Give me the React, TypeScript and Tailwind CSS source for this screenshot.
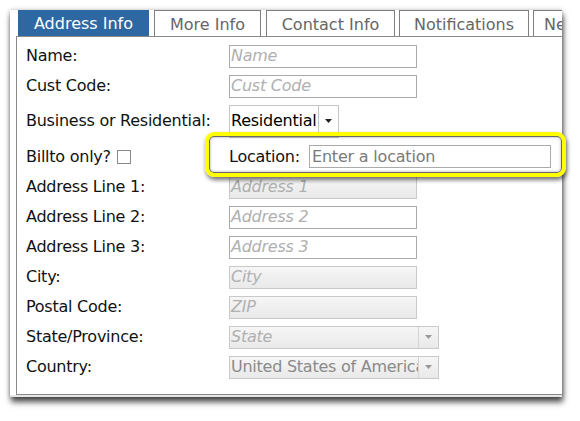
import React from "react";

const font = { fontFamily: '"DejaVu Sans", Verdana, sans-serif' };

function Arrow({ color }: { color: string }) {
  return (
    <svg width="7" height="4" viewBox="0 0 7 4">
      <polygon points="0,0 7,0 3.5,4" fill={color} />
    </svg>
  );
}

function TextBox({ ph, disabled, w = "w-[188px]" }: { ph: string; disabled?: boolean; w?: string }) {
  return (
    <div
      className={
        disabled
          ? `${w} h-[23px] border border-[#c9c9c9] bg-gradient-to-b from-[#f6f6f6] to-[#e9e9e9] flex items-center pl-[1px] overflow-hidden`
          : `${w} h-[23px] border border-[#ababab] bg-white flex items-center pl-[1px] overflow-hidden`
      }
    >
      <span className="italic text-[#b0b0b0] text-[16px] tracking-[-0.25px] whitespace-nowrap leading-none">{ph}</span>
    </div>
  );
}

function Row({ label, h = "h-[30px]", children }: { label: React.ReactNode; h?: string; children?: React.ReactNode }) {
  return (
    <div className={`flex items-center ${h}`}>
      <div className="w-[212px] shrink-0 pl-[9px] text-[16px] tracking-[-0.25px] text-[#111] whitespace-nowrap flex items-center">{label}</div>
      {children}
    </div>
  );
}

export default function App() {
  return (
    <div className="relative w-[580px] h-[421px] bg-white pt-[10px] pl-[10px]" style={font}>
      <div className="w-[552px] h-[387px] bg-white overflow-hidden flex flex-col shadow-[1px_5px_6px_rgba(0,0,0,0.7),0_0_4px_rgba(0,0,0,0.25)]">
        {/* tabs */}
        <div className="flex h-[26px] pl-[8px] shrink-0 text-[16px]">
          <div className="shrink-0 w-[131px] h-[26px] bg-[#2d68a3] border border-[#2d68a3] text-white flex items-center justify-center pt-[2px]">Address Info</div>
          <div className="shrink-0 ml-[5px] w-[107px] h-[26px] border border-b-0 border-[#7f7f7f] text-[#666] flex items-center justify-center pt-[2px]">More Info</div>
          <div className="shrink-0 ml-[5px] w-[129px] h-[26px] border border-b-0 border-[#7f7f7f] text-[#666] flex items-center justify-center pt-[2px]">Contact Info</div>
          <div className="shrink-0 ml-[4px] w-[130px] h-[26px] border border-b-0 border-[#7f7f7f] text-[#666] flex items-center justify-center pt-[2px]">Notifications</div>
          <div className="shrink-0 ml-[4px] w-[120px] h-[26px] border border-b-0 border-[#7f7f7f] text-[#666] flex items-center pl-[10px] pt-[2px]">Next</div>
        </div>
        {/* panel */}
        <div className="ml-[6px] w-[560px] shrink-0 h-[359px] border-l border-t border-b border-[#8a8a8a] bg-white pt-[4px] flex flex-col">
          <Row label="Name:"><TextBox ph="Name" /></Row>
          <Row label="Cust Code:"><TextBox ph="Cust Code" /></Row>
          <Row label="Business or Residential:" h="h-[40px]">
            <div className="w-[110px] h-[33px] border border-[#c4c4c4] bg-white flex">
              <div className="w-[88px] overflow-hidden flex items-center pl-[1px] text-[16px] tracking-[-0.25px] text-black whitespace-nowrap">Residential</div>
              <div className="flex-1 border-l border-[#c4c4c4] flex items-center justify-center"><Arrow color="#222" /></div>
            </div>
          </Row>
          <Row
            label={
              <>
                <span>Billto only?</span>
                <span className="ml-[6px] inline-block w-[14px] h-[14px] border border-[#8a8a8a] bg-white" />
              </>
            }
            h="h-[31px]"
          >
            <span className="text-[16px] tracking-[-0.25px] text-[#111] w-[80px] whitespace-nowrap">Location:</span>
            <div className="w-[242px] h-[23px] border border-[#ababab] bg-white flex items-center pl-[2px]">
              <span className="text-[16px] text-[#7a7a7a] tracking-[-0.2px] whitespace-nowrap leading-none">Enter a location</span>
            </div>
          </Row>
          <Row label="Address Line 1:"><TextBox ph="Address 1" disabled /></Row>
          <Row label="Address Line 2:"><TextBox ph="Address 2" /></Row>
          <Row label="Address Line 3:"><TextBox ph="Address 3" /></Row>
          <Row label="City:"><TextBox ph="City" disabled /></Row>
          <Row label="Postal Code:"><TextBox ph="ZIP" disabled /></Row>
          <Row label="State/Province:">
            <div className="w-[210px] h-[23px] border border-[#c9c9c9] bg-gradient-to-b from-[#f6f6f6] to-[#e9e9e9] flex">
              <div className="w-[188px] overflow-hidden flex items-center pl-[1px] italic text-[16px] tracking-[-0.25px] text-[#b0b0b0] whitespace-nowrap">State</div>
              <div className="flex-1 border-l border-[#d4d4d4] flex items-center justify-center"><Arrow color="#999" /></div>
            </div>
          </Row>
          <Row label="Country:">
            <div className="w-[210px] h-[23px] border border-[#c9c9c9] bg-gradient-to-b from-[#f6f6f6] to-[#e9e9e9] flex">
              <div className="w-[188px] overflow-hidden flex items-center pl-[1px] text-[16px] tracking-[-0.25px] text-[#8a8a8a] whitespace-nowrap">United States of America</div>
              <div className="flex-1 border-l border-[#d4d4d4] flex items-center justify-center"><Arrow color="#999" /></div>
            </div>
          </Row>
        </div>
        <div className="flex-1 bg-[#e6e6e6]" />
      </div>
      {/* annotation highlight */}
      <div className="absolute left-[205px] top-[132px] w-[361px] h-[45px] rounded-[9px] border-[4px] border-[#ffff00] shadow-[inset_0_0_0_1px_#6a6a6a,inset_0_0_3px_1px_rgba(0,0,0,0.35),1px_3px_4px_rgba(0,0,0,0.55)]" />
    </div>
  );
}
